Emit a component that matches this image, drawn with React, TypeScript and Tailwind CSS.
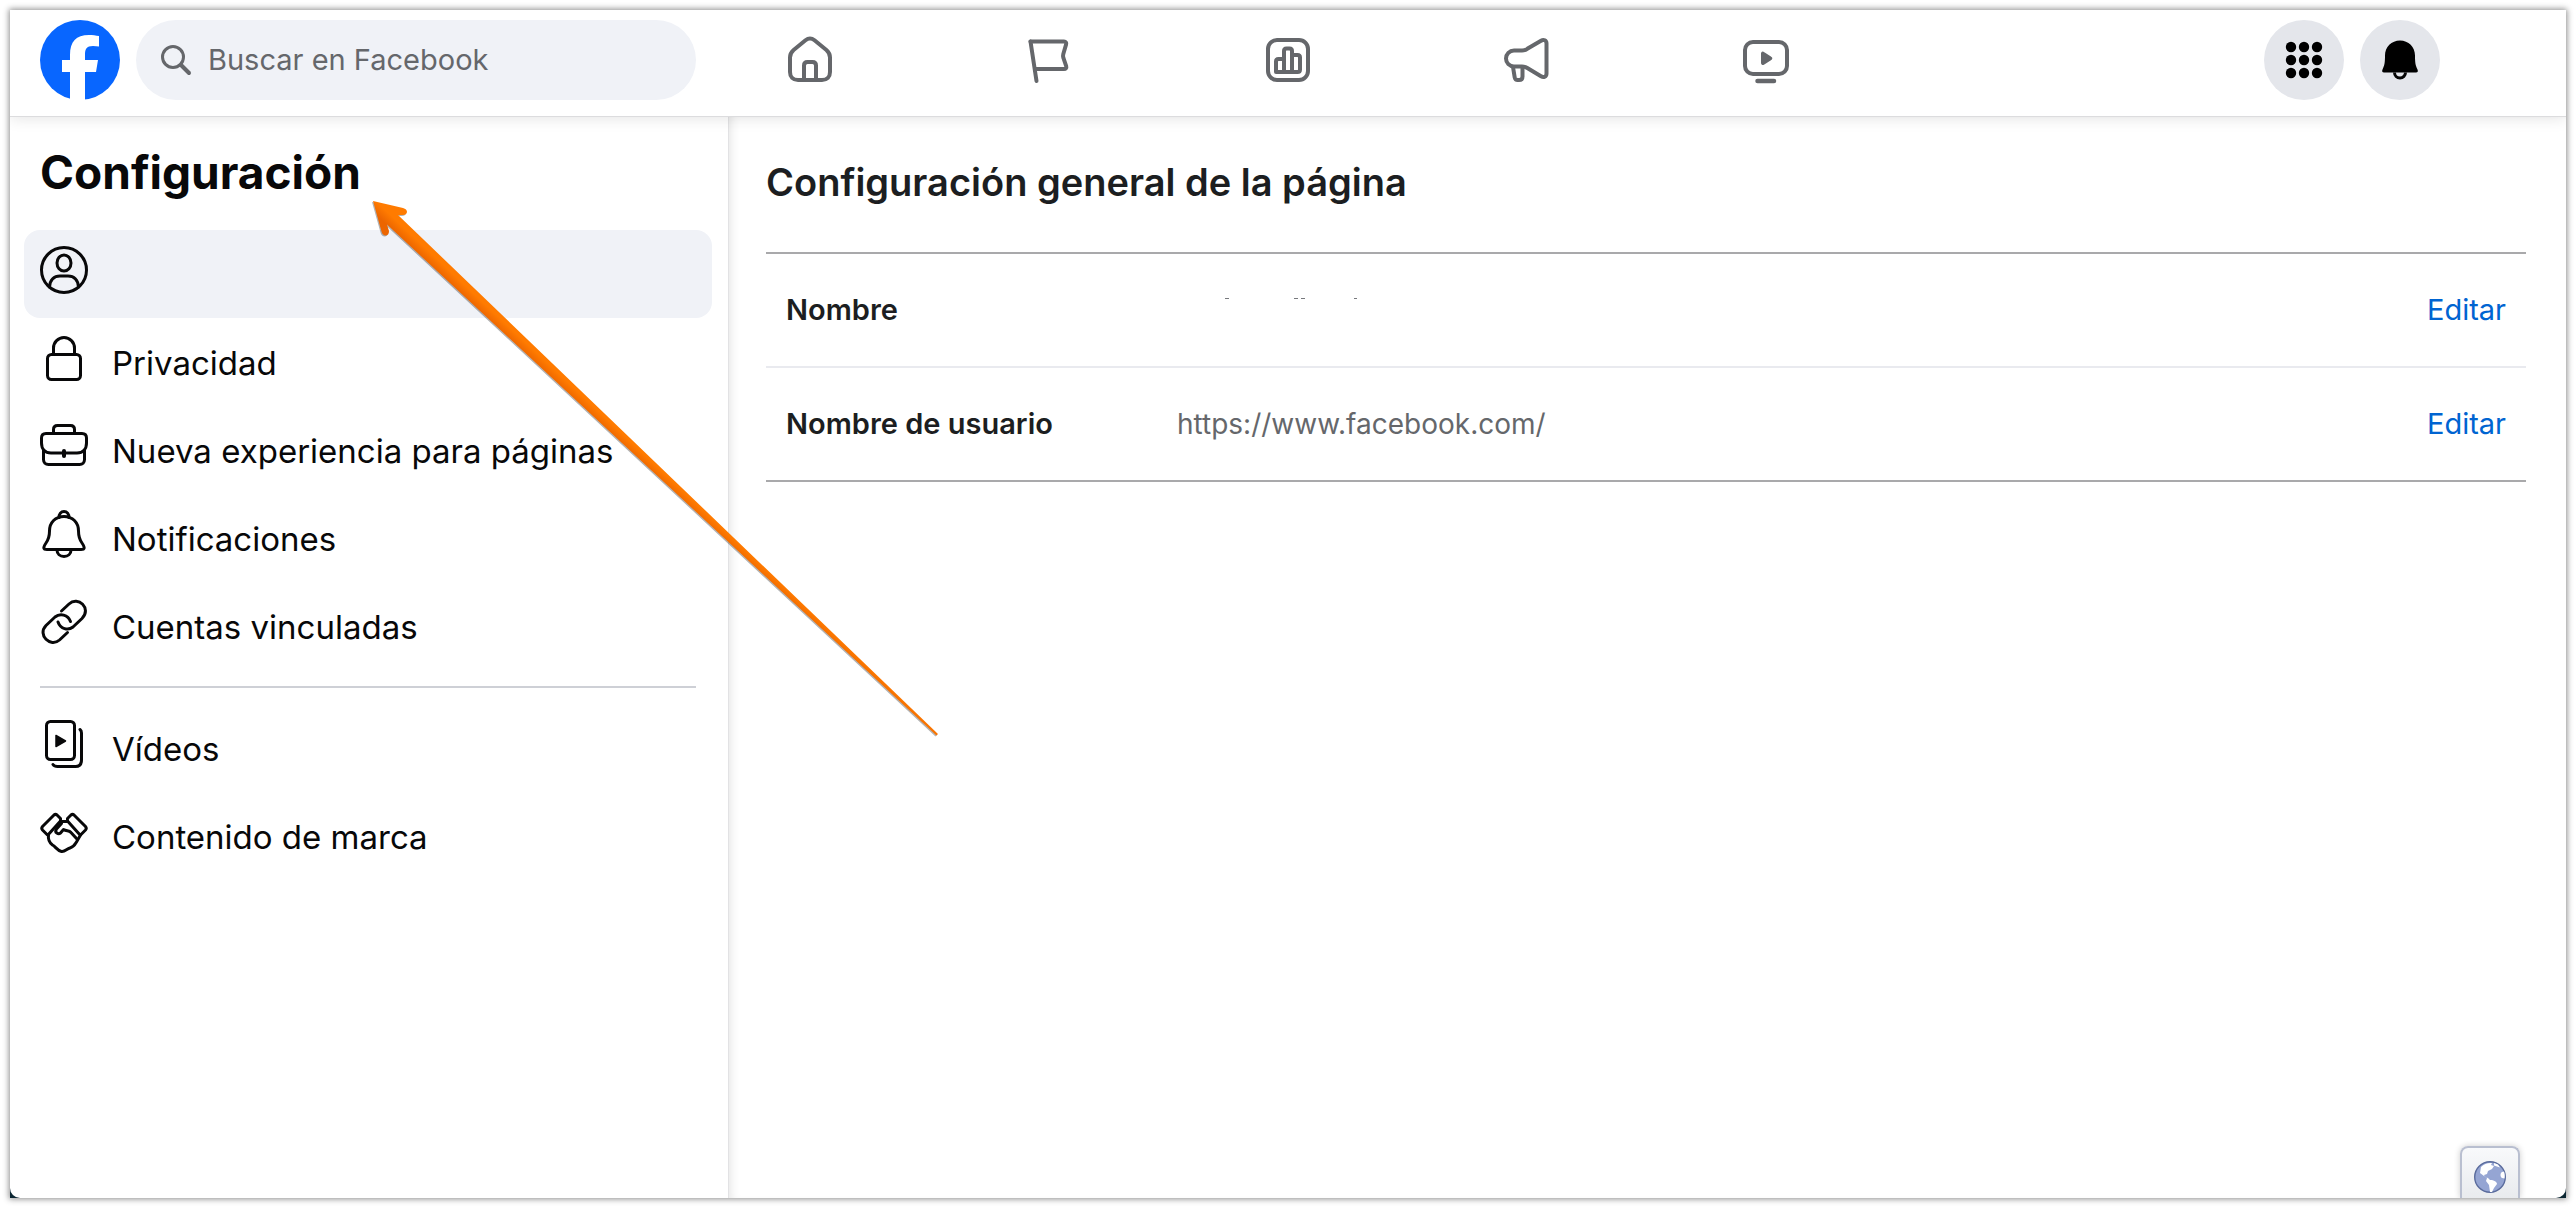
import type { ReactNode } from "react";

type IconProps = { children: ReactNode; className?: string; width?: number };

function Icon({ children, className = "", width = 3 }: IconProps) {
  return (
    <svg
      viewBox="0 0 48 48"
      className={`size-12 shrink-0 ${className}`}
      fill="none"
      stroke="currentColor"
      strokeWidth={width}
      strokeLinecap="round"
      strokeLinejoin="round"
      aria-hidden="true"
    >
      {children}
    </svg>
  );
}

const navItems: { label: string; icon: ReactNode }[] = [
  {
    label: "Inicio",
    icon: (
      <>
        <path d="M4 21.5c0-3.300 1.200-5.400 3.600-7.500L19.500 4.300c2.800-2.300 6.200-2.300 9 0L40.400 14c2.400 2.100 3.600 4.200 3.600 7.500V36c0 5-3 8-8 8H12c-5 0-8-3-8-8V21.500Z" />
        <path d="M18 43V29.500c0-2.200 1.300-3.500 3.500-3.500h5c2.200 0 3.500 1.300 3.500 3.500V43" />
      </>
    ),
  },
  {
    label: "Páginas",
    icon: (
      <>
        <path d="M5.500 5.500 11.500 45" />
        <path d="M5.500 5.500H39c1.800 0 2.600 1.200 2.100 2.800L38.300 18c-.4 1.400-.4 2.300 0 3.700l2.900 8.500c.5 1.700-.4 2.800-2.200 2.800H10" />
      </>
    ),
  },
  {
    label: "Estadísticas",
    icon: (
      <>
        <rect x="4" y="4" width="40" height="40" rx="9" />
        <path d="M12 36V25.500c0-1.500 1-2.500 2.500-2.500H20V15c0-1.500 1-2.500 2.500-2.500h3c1.500 0 2.500 1 2.500 2.500v4h5.500c1.500 0 2.500 1 2.500 2.500V33.500c0 1.500-1 2.500-2.500 2.500h-19c-1.500 0-2.500-1-2.500-2.500M20 23v13M28 19v17" />
      </>
    ),
  },
  {
    label: "Anuncios",
    icon: (
      <>
        <path d="M11 14.500h8c2.200 0 3.700-.6 5.300-1.700L38 4.700c2.700-1.600 5.500-.5 5.500 2.800v30c0 3.300-2.800 4.400-5.500 2.800L24.300 32c-1.600-1-3.100-1.500-5.300-1.500h-8c-4.500 0-8-3.500-8-8s3.500-8 8-8Z" />
        <path d="m10 31 1.700 10.400c.3 1.600 1.300 2.600 3 2.600h1.300c2.200 0 3.500-1.300 3.500-3.500V31" />
      </>
    ),
  },
  {
    label: "Vídeos en directo",
    icon: (
      <>
        <rect x="3" y="6" width="42" height="32" rx="8" />
        <path d="M15.500 45h16.500" strokeWidth="4.500" />
        <path d="M20 17.500v9.500c0 .8.700 1.200 1.400.8l7.400-4.700c.7-.4.7-1.200 0-1.600l-7.400-4.700c-.7-.5-1.400 0-1.400.7Z" fill="currentColor" strokeWidth="2" />
      </>
    ),
  },
];

type Entry = { label: string; icon: ReactNode; selected?: boolean };

const pageEntries: Entry[] = [
  {
    label: "",
    selected: true,
    icon: (
      <>
        <circle cx="24" cy="24" r="22.500" />
        <ellipse cx="24" cy="17" rx="7" ry="8" />
        <path d="M9.500 41c.5-7 4.500-11 10.500-11h8c6 0 10 4 10.500 11" />
      </>
    ),
  },
  {
    label: "Privacidad",
    icon: (
      <>
        <rect x="7.500" y="20.500" width="33" height="25" rx="4" />
        <path d="M13.500 20v-6a10.500 10.500 0 0 1 21 0v6" />
      </>
    ),
  },
  {
    label: "Nueva experiencia para páginas",
    icon: (
      <>
        <path d="M13.500 10V7.500c0-2.500 1.500-4 4-4h13c2.500 0 4 1.500 4 4V10" />
        <path d="M6 11.500h36c3 0 4.500 1.500 4.500 4.500v5c0 6-3.500 10-9.500 10H11C5 31 1.500 27 1.500 21v-5c0-3 1.500-4.500 4.500-4.500Z" />
        <path d="M3.500 28v9.500c0 3 2 5 5 5h31c3 0 5-2 5-5V28" />
        <path d="M24 29v5" strokeWidth="4" />
      </>
    ),
  },
  {
    label: "Notificaciones",
    icon: (
      <>
        <path d="M19 7.500C19 4 21 1.500 24 1.500S29 4 29 7.500" />
        <path d="M24 6.500c8.500 0 14.500 6 14.500 14.500 0 6 1 8.500 3.500 12 3.500 5 2.500 6.500-1 6.500H7c-3.500 0-4.500-1.500-1-6.500 2.500-3.500 3.500-6 3.500-12C9.500 12.500 15.500 6.500 24 6.500Z" />
        <path d="M17 40c0 4 3 6.500 7 6.500s7-2.500 7-6.500" />
      </>
    ),
  },
  {
    label: "Cuentas vinculadas",
    icon: (
      <>
        <path d="M21.500 13 29 6C38-2.500 52 10.500 42 20.500L33 29c-5 4-12.500 2-15-5" />
        <path d="M27.500 34.500 19.500 42C10.500 50-3 37 6 27.500L15 19c5-4 13-2.500 15.500 4.500" />
      </>
    ),
  },
];

const contentEntries: Entry[] = [
  {
    label: "Vídeos",
    icon: (
      <>
        <rect x="6.500" y="1.500" width="28" height="38" rx="4" />
        <path d="M40 9.500c1 .8 1.500 1.800 1.500 3.500v27c0 4-2 6.500-6 6.500H17.500c-2 0-3.500-.5-4.500-2" />
        <path d="M16 15.500v11l9.500-5.500Z" fill="currentColor" strokeWidth="1.500" />
      </>
    ),
  },
  {
    label: "Contenido de marca",
    icon: (
      <>
        <path d="M20.500 10.500 17 7q-1.500-1.200-3 0L2.500 18.500q-1.500 1.800 0 3.500L7 26.500q.8.600 1.600-.2L20.500 13Z" />
        <path d="M27.500 10.500 31 7q1.500-1.200 3 0l11.500 11.500q1.500 1.800 0 3.500L41 26.500q-.8.600-1.600-.2L27.500 13Z" />
        <path d="M20.500 13.500h7M8.500 26.500c-.5 4 .5 8 4 10.500 3 1.500 4.500 5.500 9 6.500 3.500.5 5-2.500 8.500-3.500 4-1 5-3.500 6.500-6l4-7" />
        <path d="m21.500 15.500-5 5.500c-2.500 4 2 5.500 4 4l3-3.500c3 2 5.500.5 7.500 3l5.500 6" />
      </>
    ),
  },
];

function MenuEntry({ label, icon, selected }: Entry) {
  return (
    <li>
      <a
        href="#"
        aria-label={label || "Página"}
        aria-current={selected ? "page" : undefined}
        className={`flex h-22 gap-6 rounded-2xl px-4 pt-4 ${selected ? "bg-[#f0f2f7]" : ""}`}
      >
        <Icon>{icon}</Icon>
        <span className="pt-1 text-[33px] leading-[50px] whitespace-nowrap">{label}</span>
      </a>
    </li>
  );
}

function Header() {
  return (
    <header className="z-10 grid h-[107px] grid-cols-[1fr_auto_1fr] border-b border-[#dcdcde] bg-white pt-[10px] shadow-[0_2px_14px_rgba(0,0,0,0.1)]">
      <div className="flex gap-4 pl-[30px]">
        <a href="#" aria-label="Facebook" className="size-20">
          <svg viewBox="0 0 80 80" className="size-20" aria-hidden="true">
            <circle cx="40" cy="40" r="40" fill="#0866ff" />
            <path
              d="M30 80V52h-8V40h8v-5c0-13.500 6-20 19-20 3.500 0 7 .5 10 1v10.500c-2-.3-4-.5-6-.5-6.500 0-8 3-8 9v5h13l-2 12H45v28Z"
              fill="#fff"
            />
          </svg>
        </a>
        <label className="flex h-20 w-[560px] items-center gap-4 rounded-full bg-[#f0f2f7] pl-6 text-[#65676b]">
          <svg viewBox="0 0 32 32" className="size-8" fill="none" stroke="currentColor" strokeLinecap="round" aria-hidden="true">
            <circle cx="13" cy="13" r="10.500" strokeWidth="3" />
            <path d="m21 21 8 8" strokeWidth="4" />
          </svg>
          <input
            type="search"
            aria-label="Buscar en Facebook"
            placeholder="Buscar en Facebook"
            className="min-w-0 grow bg-transparent text-[29px] outline-none placeholder:text-[#65676b]"
          />
        </label>
      </div>
      <nav className="flex h-20 gap-10" aria-label="Principal">
        {navItems.map((item) => (
          <button key={item.label} aria-label={item.label} className="grid w-[199px] place-items-center text-[#65676b]">
            <Icon width={4}>{item.icon}</Icon>
          </button>
        ))}
      </nav>
      <div className="flex justify-end gap-4 pr-[126px]">
        <button aria-label="Menú" className="grid size-20 place-items-center rounded-full bg-[#e4e6eb]">
          <svg viewBox="0 0 40 40" className="size-10" aria-hidden="true">
            {[7, 20, 33].map((y) => [7, 20, 33].map((x) => <circle key={`${x}-${y}`} cx={x} cy={y} r="5.200" />))}
          </svg>
        </button>
        <button aria-label="Notificaciones" className="grid size-20 place-items-center rounded-full bg-[#e4e6eb]">
          <svg viewBox="0 0 40 40" className="size-10" aria-hidden="true">
            <path d="M20 .5C28.500.5 35 7 35 15.500c0 7 .5 10 2.500 14 .8 1.800.2 3-1.500 3H4c-1.700 0-2.300-1.200-1.500-3 2-4 2.500-7 2.500-14C5 7 11.500.5 20 .5Z" />
            <path d="M14.500 32.500a5.500 5.500 0 0 0 11 0" fill="none" stroke="#050505" strokeWidth="3" />
          </svg>
        </button>
      </div>
    </header>
  );
}

function Sidebar() {
  return (
    <aside className="w-[718px] shrink-0 pr-4 pl-[14px] text-[#080809]">
      <h1 className="px-4 pt-[26px] pb-[29px] text-[46px] leading-[58px] font-bold">Configuración</h1>
      <ul>
        {pageEntries.map((entry) => (
          <MenuEntry key={entry.label} {...entry} />
        ))}
      </ul>
      <hr className="mx-4 my-4 border-t-2 border-[#ced0d6]" />
      <ul>
        {contentEntries.map((entry) => (
          <MenuEntry key={entry.label} {...entry} />
        ))}
      </ul>
    </aside>
  );
}

function HiddenName() {
  return (
    <svg viewBox="0 0 200 24" className="h-6 w-[200px] text-[#77797d]" fill="currentColor" aria-hidden="true">
      <rect x="48" y="0" width="4" height="1" />
      <rect x="117" y="0" width="4" height="1" />
      <rect x="124" y="0" width="4" height="1" />
      <rect x="177" y="0" width="3" height="1" />
    </svg>
  );
}

function Globe() {
  return (
    <svg viewBox="0 0 32 32" className="size-8" aria-hidden="true">
      <circle cx="16" cy="16" r="15.300" fill="#95a5d3" stroke="#5a6b9c" strokeWidth="1.400" />
      <path
        d="M7 6c3-3 7-4.500 11-4l-1 2 3 1-2 3-4 2-1 3-3 1 1 2 3 1 2 2c4 0 7 2 7 4l-3 4-2 4h-2l-1-7-3-4 1-3-3-2-4-3Z"
        fill="#fff"
      />
      <path d="m20 2 4 1.500 2 3-3-1-3-1ZM28 11c-2 1-2 5 0 6l2.500.5c.5-2 .3-5-.5-7Z" fill="#fff" />
    </svg>
  );
}

function Settings() {
  return (
    <main className="grow border-l border-[#e2e2e4] pt-[35px] pr-10 pl-[37px] text-[#1c1e21] shadow-[inset_8px_0_10px_-6px_rgba(0,0,0,0.1)]">
      <h2 className="text-[38px] leading-[60px] font-semibold">Configuración general de la página</h2>
      <table className="mt-10 w-full table-fixed border-y-2 border-[#a9a9ab] text-left text-[29px]">
        <tbody>
          <tr className="h-[114px] border-b-2 border-[#e9eaef]">
            <th scope="row" className="w-[411px] pl-5 font-semibold">Nombre</th>
            <td>
              <HiddenName />
            </td>
            <td className="w-[200px] pr-5 text-right">
              <a href="#" className="text-[#0064d1]">Editar</a>
            </td>
          </tr>
          <tr className="h-[114px]">
            <th scope="row" className="pl-5 font-semibold">Nombre de usuario</th>
            <td className="text-[28px] text-[#65676b]">https://www.facebook.com/</td>
            <td className="pr-5 text-right">
              <a href="#" className="text-[#0064d1]">Editar</a>
            </td>
          </tr>
        </tbody>
      </table>
    </main>
  );
}

function Arrow() {
  return (
    <svg
      viewBox="0 0 580 550"
      className="pointer-events-none absolute top-[191px] left-[363px] z-20 h-[550px] w-[580px] drop-shadow-[-1px_1px_0px_rgba(0,0,0,0.3)]"
      aria-hidden="true"
    >
      <defs>
        <linearGradient id="arrow" gradientUnits="userSpaceOnUse" x1="297.200" y1="291.400" x2="303.800" y2="284.400">
          <stop offset="0" stopColor="#ec6500" />
          <stop offset="1" stopColor="#ff7b00" />
        </linearGradient>
      </defs>
      <path
        d="M10 10 40 17q4 1 4 4-.5 3-4 3h-5L575 543 573.500 544.500 24 33.500l2 6.500q0 4-3 4.500-3.500 0-4.500-4Z"
        fill="url(#arrow)"
      />
    </svg>
  );
}

export default function App() {
  return (
    <div className="relative flex min-h-screen bg-white px-[10px] pt-[10px] pb-[10px] font-[Inter,sans-serif]">
      <div className="flex grow bg-[#0c2733] shadow-[0_0_6px_1px_rgba(0,0,0,0.45)]">
        <div className="relative flex grow flex-col overflow-hidden rounded-b-[10px] bg-white">
          <Header />
          <div className="flex grow">
            <Sidebar />
            <Settings />
          </div>
          <button
            aria-label="Idioma"
            className="absolute right-[46px] bottom-0 grid h-[52px] w-[60px] place-items-center rounded-t-lg border-2 border-b-0 border-[#b9bfd0] bg-linear-to-b from-[#f8f9fb] to-[#e9ebee] pt-2 shadow-[0_0_6px_rgba(0,0,0,0.2)]"
          >
            <Globe />
          </button>
        </div>
      </div>
      <Arrow />
    </div>
  );
}
